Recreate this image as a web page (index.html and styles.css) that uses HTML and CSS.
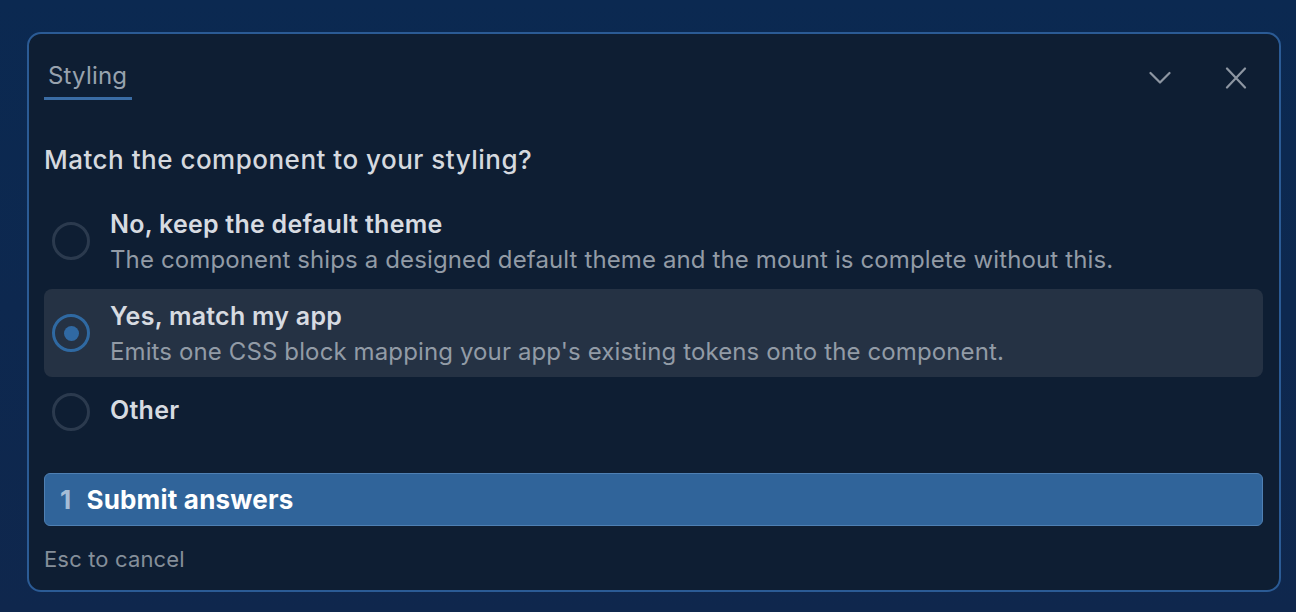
FILE: index.html
```html
<!DOCTYPE html>
<html lang="en">
<head>
    <meta charset="UTF-8">
    <title>Styling</title>
    <link rel="stylesheet" href="styles.css">
</head>
<body>
<div class="dialog">
    <div class="dialog-head">
        <div class="tab">Styling</div>
        <div class="head-actions">
            <button class="icon-btn" aria-label="Collapse">
                <svg width="22" height="22" viewBox="0 0 22 22" fill="none" stroke="currentColor" stroke-width="2.2" stroke-linecap="round" stroke-linejoin="round">
                    <path d="M1.5 6l9.5 9.5 9.5-9.5"/>
                </svg>
            </button>
            <button class="icon-btn" aria-label="Close">
                <svg width="22" height="22" viewBox="0 0 22 22" fill="none" stroke="currentColor" stroke-width="2.2" stroke-linecap="round">
                    <path d="M2 1.5l18 19M20 1.5L2 20.5"/>
                </svg>
            </button>
        </div>
    </div>

    <h2 class="question">Match the component to your styling?</h2>

    <div class="options">
        <label class="option">
            <span class="radio"></span>
            <span class="option-text">
                <span class="option-title">No, keep the default theme</span>
                <span class="option-desc">The component ships a designed default theme and the mount is complete without this.</span>
            </span>
        </label>
        <label class="option selected">
            <span class="radio"></span>
            <span class="option-text">
                <span class="option-title">Yes, match my app</span>
                <span class="option-desc">Emits one CSS block mapping your app's existing tokens onto the component.</span>
            </span>
        </label>
        <label class="option short">
            <span class="radio"></span>
            <span class="option-text">
                <span class="option-title">Other</span>
            </span>
        </label>
    </div>

    <button class="submit"><span class="key">1</span>Submit answers</button>

    <div class="hint">Esc to cancel</div>
</div>
</body>
</html>
```

FILE: styles.css
```css
* {
    margin: 0;
    padding: 0;
    box-sizing: border-box;
}
body {
    background: linear-gradient(180deg, #0b2951 0%, #0f274d 100%);
    font-family: Inter, "Noto Sans", "Liberation Sans", sans-serif;
    height: 612px;
    padding: 32px 15px 20px 27px;
}
.dialog {
    width: 1254px;
    height: 560px;
    background: #0e1e33;
    border: 2px solid #2b5b95;
    border-radius: 14px;
    padding: 27px 16px 0 15px;
}
.dialog-head {
    display: flex;
    justify-content: space-between;
    align-items: flex-start;
}
.tab {
    font-size: 24px;
    line-height: 30px;
    letter-spacing: 0.2px;
    color: #98a2ae;
    padding: 0 5px 6px 4px;
    border-bottom: 3px solid #3a6ca4;
}
.head-actions {
    display: flex;
    gap: 54px;
    margin-right: 16px;
    margin-top: 6px;
}
.icon-btn {
    background: none;
    border: none;
    color: #8d96a2;
    width: 22px;
    height: 22px;
    display: flex;
}
.question {
    margin-top: 44px;
    font-size: 26px;
    line-height: 32px;
    font-weight: 500;
    letter-spacing: 0.5px;
    color: #d5d9df;
}
.options {
    margin-top: 21px;
    display: flex;
    flex-direction: column;
    gap: 4px;
}
.option {
    display: flex;
    align-items: center;
    gap: 20px;
    height: 88px;
    padding: 0 8px;
    border-radius: 8px;
}
.option.short {
    height: 60px;
}
.option.selected {
    background: #253244;
}
.radio {
    flex: none;
    width: 38px;
    height: 38px;
    border: 3px solid #2b3a4e;
    border-radius: 50%;
    display: flex;
    align-items: center;
    justify-content: center;
}
.short .radio {
    margin-top: 2px;
}
.selected .radio {
    border-color: #2f69a2;
}
.selected .radio::after {
    content: '';
    width: 15px;
    height: 15px;
    border-radius: 50%;
    background: #3069a3;
}
.option-text {
    display: flex;
    flex-direction: column;
    gap: 6px;
    padding-top: 2px;
}
.short .option-text {
    padding-top: 0;
    margin-top: -2px;
}
.option-title {
    font-size: 25px;
    line-height: 30px;
    font-weight: 600;
    letter-spacing: 0.25px;
    color: #d7dbe1;
}
.option-desc {
    font-size: 24px;
    line-height: 30px;
    letter-spacing: 0.12px;
    color: #929ba6;
}
.submit {
    margin-top: 32px;
    width: 100%;
    height: 53px;
    display: flex;
    align-items: center;
    background: #30649a;
    border: 1px solid #4f80b3;
    border-radius: 6px;
    padding-left: 15px;
    font-family: inherit;
    font-size: 26px;
    font-weight: 700;
    letter-spacing: 0.2px;
    color: #ffffff;
    text-align: left;
}
.key {
    color: #a6bdd6;
    margin-right: 15px;
}
.hint {
    margin-top: 19px;
    font-size: 22px;
    line-height: 28px;
    letter-spacing: 0.15px;
    color: #858f9a;
}
```
